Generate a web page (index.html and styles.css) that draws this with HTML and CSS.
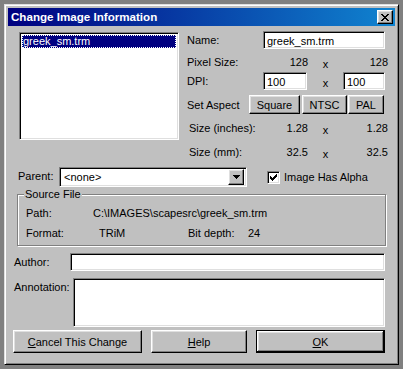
FILE: index.html
```html
<!DOCTYPE html>
<html>
<head>
<meta charset="utf-8">
<title>Change Image Information</title>
<link rel="stylesheet" href="styles.css">
</head>
<body>
<div class="window">
  <div class="titlebar">
    <span class="title">Change Image Information</span>
    <span class="close btn"><svg width="8" height="7" viewBox="0 0 8 7" shape-rendering="crispEdges"><path d="M0 0h2v1h-2z M6 0h2v1h-2z M1 1h2v1h-2z M5 1h2v1h-2z M2 2h4v1h-4z M3 3h2v1h-2z M2 4h4v1h-4z M1 5h2v1h-2z M5 5h2v1h-2z M0 6h2v1h-2z M6 6h2v1h-2z" fill="#000"/></svg></span>
  </div>
  <div class="body">
    <div class="top">
      <div class="listbox sunken">
        <div class="item selected">greek_sm.trm</div>
      </div>
      <div class="props">
        <div class="prow r-name">
          <span class="lbl">Name:</span>
          <div class="field sunken name-field">greek_sm.trm</div>
        </div>
        <div class="prow r-pixel">
          <span class="lbl">Pixel Size:</span>
          <span class="num">128</span>
          <span class="times">x</span>
          <span class="num">128</span>
        </div>
        <div class="prow r-dpi">
          <span class="lbl">DPI:</span>
          <div class="field sunken dpi-field">100</div>
          <span class="times">x</span>
          <div class="field sunken dpi-field dpi2">100</div>
        </div>
        <div class="prow r-aspect">
          <span class="lbl aspect-lbl">Set Aspect</span>
          <div class="btn aspect-btn b-square">Square</div>
          <div class="btn aspect-btn b-ntsc">NTSC</div>
          <div class="btn aspect-btn b-pal">PAL</div>
        </div>
        <div class="prow r-inches">
          <span class="lbl ind">Size (inches):</span>
          <span class="num">1.28</span>
          <span class="times">x</span>
          <span class="num">1.28</span>
        </div>
        <div class="prow r-mm">
          <span class="lbl ind">Size (mm):</span>
          <span class="num">32.5</span>
          <span class="times">x</span>
          <span class="num">32.5</span>
        </div>
      </div>
    </div>

    <div class="parent-row">
      <span class="parent-lbl">Parent:</span>
      <div class="combo sunken">
        <span class="combo-text">&lt;none&gt;</span>
        <span class="combo-btn btn"><svg width="7" height="4" viewBox="0 0 7 4" shape-rendering="crispEdges"><path d="M0 0h7v1h-7z M1 1h5v1h-5z M2 2h3v1h-3z M3 3h1v1h-1z" fill="#000"/></svg></span>
      </div>
      <span class="checkbox sunken"><svg width="7" height="7" viewBox="0 0 7 7" shape-rendering="crispEdges"><path d="M6 0h1v1h-1z M5 1h2v1h-2z M0 2h1v1h-1z M4 2h3v1h-3z M0 3h2v1h-2z M3 3h3v1h-3z M0 4h5v1h-5z M1 5h3v1h-3z M2 6h1v1h-1z" fill="#000"/></svg></span>
      <span class="check-lbl">Image Has Alpha</span>
    </div>

    <fieldset class="group">
      <legend>Source File</legend>
      <div class="grow g-path">
        <span class="g-lbl path-lbl">Path:</span>
        <span>C:\IMAGES\scapesrc\greek_sm.trm</span>
      </div>
      <div class="grow g-format">
        <span class="g-lbl format-lbl">Format:</span>
        <span class="format-val">TRiM</span>
        <span class="depth-lbl">Bit depth:</span>
        <span>24</span>
      </div>
    </fieldset>

    <div class="author-row">
      <span class="side-lbl">Author:</span>
      <div class="field sunken author-field"></div>
    </div>

    <div class="annot-row">
      <span class="side-lbl annot-lbl">Annotation:</span>
      <div class="sunken annot-field"></div>
    </div>

    <div class="buttons">
      <div class="btn big b-cancel"><span class="u">C</span>ancel This Change</div>
      <div class="btn big b-help"><span class="u">H</span>elp</div>
      <div class="btn big default b-ok"><span class="u">O</span>K</div>
    </div>
  </div>
</div>
</body>
</html>
```

FILE: styles.css
```css
* { box-sizing: border-box; }
html, body { margin: 0; padding: 0; }
body {
  background: #808080;
  font-family: "Liberation Sans", Arial, sans-serif;
  font-size: 11px;
  color: #000;
  padding: 4px;
  width: 403px;
  height: 369px;
  overflow: hidden;
}
.window {
  width: 395px;
  height: 361px;
  background: #c0c0c0;
  border: 1px solid;
  border-color: #dfdfdf #000 #000 #dfdfdf;
  box-shadow: inset 1px 1px 0 #fff, inset -1px -1px 0 #808080;
  padding: 3px;
}
.titlebar {
  height: 18px;
  background: linear-gradient(90deg, #000080, #1084d0);
  display: flex;
  align-items: center;
  justify-content: space-between;
  padding: 0 2px 0 3px;
}
.title {
  color: #fff;
  font-weight: bold;
  font-size: 11.6px;
  line-height: 18px;
}
.sunken {
  background: #fff;
  border: 1px solid;
  border-color: #808080 #fff #fff #808080;
  box-shadow: inset 1px 1px 0 #000, inset -1px -1px 0 #dfdfdf;
}
.btn {
  background: #c0c0c0;
  border: 1px solid;
  border-color: #fff #000 #000 #fff;
  box-shadow: inset -1px -1px 0 #808080, inset 1px 1px 0 #dfdfdf;
  display: flex;
  align-items: center;
  justify-content: center;
}
.close {
  width: 16px;
  height: 14px;
}
.body {
  display: flex;
  flex-direction: column;
}
.top {
  display: flex;
  align-items: flex-start;
}
.listbox {
  margin: 6px 0 0 11px;
  width: 160px;
  height: 108px;
  padding: 2px;
}
.item {
  height: 13px;
  line-height: 13px;
  padding-left: 1px;
}
.item.selected {
  background: #000080;
  color: #fff;
  outline: 1px dotted #fff;
  outline-offset: -1px;
}
.props {
  margin-left: 8px;
  display: flex;
  flex-direction: column;
}
.prow {
  display: grid;
  grid-template-columns: 76px 45px 35px 45px;
  align-items: center;
  height: 18px;
}
.r-name { margin-top: 5px; }
.r-pixel { margin-top: 4px; }
.r-dpi { margin-top: 1px; }
.r-aspect { margin-top: 5px; height: 19px; display: flex; }
.r-inches { margin-top: 5px; }
.r-mm { margin-top: 6px; }
.lbl.ind { padding-left: 2px; }
.num { text-align: right; }
.times { text-align: center; padding-top: 3px; }
.field {
  height: 18px;
  line-height: 14px;
  padding: 2px 3px;
  white-space: nowrap;
}
.name-field { grid-column: 2 / 5; width: 122px; }
.dpi-field { width: 44px; }
.dpi2 { width: 42px; }
.aspect-lbl { width: 62px; }
.aspect-btn { height: 19px; }
.b-square { width: 51px; }
.b-ntsc { width: 45px; margin-left: 2px; }
.b-pal { width: 36px; margin-left: 1px; }

.parent-row {
  display: flex;
  align-items: center;
  margin-top: 6px;
  height: 20px;
}
.parent-lbl { margin-left: 10px; width: 41px; padding-bottom: 2px; }
.combo {
  width: 188px;
  height: 20px;
  display: flex;
  align-items: center;
  justify-content: space-between;
  padding: 2px;
}
.combo-text { padding-left: 2px; }
.combo-btn { width: 16px; height: 16px; }
.checkbox {
  width: 13px;
  height: 13px;
  margin-left: 20px;
  display: flex;
  align-items: center;
  justify-content: center;
}
.check-lbl { margin-left: 4px; }

.group {
  margin: 1px 0 0 9px;
  width: 369px;
  padding: 0 0 3px 8px;
  border: 1px solid #808080;
  box-shadow: inset 1px 1px 0 #fff, 1px 1px 0 #fff;
  min-width: 0;
}
.group legend {
  padding: 0 1px;
  margin-left: -2px;
  line-height: 13px;
  background: #c0c0c0;
}
.grow {
  display: flex;
  align-items: center;
  height: 18px;
}
.g-path { margin-top: 3px; }
.g-format { margin-top: 2px; }
.path-lbl { width: 67px; }
.format-lbl { width: 73px; }
.format-val { width: 89px; }
.depth-lbl { width: 60px; }

.author-row {
  display: flex;
  align-items: center;
  margin-top: 7px;
}
.side-lbl { margin-left: 6px; }
.author-field { width: 315px; margin-left: 21px; }
.annot-row {
  display: flex;
  align-items: flex-start;
  margin-top: 7px;
}
.annot-lbl { margin-top: 3px; }
.annot-field { width: 312px; height: 49px; margin-left: 3px; }

.buttons {
  display: flex;
  margin-top: 3px;
}
.big { height: 23px; }
.b-cancel { width: 129px; margin-left: 5px; }
.b-help { width: 96px; margin-left: 9px; }
.b-ok { width: 129px; margin-left: 9px; }
.btn.default {
  border: 1px solid #000;
  box-shadow: inset -1px -1px 0 #000, inset 1px 1px 0 #fff, inset -2px -2px 0 #808080, inset 2px 2px 0 #dfdfdf;
}
.u { text-decoration: underline; }
```
